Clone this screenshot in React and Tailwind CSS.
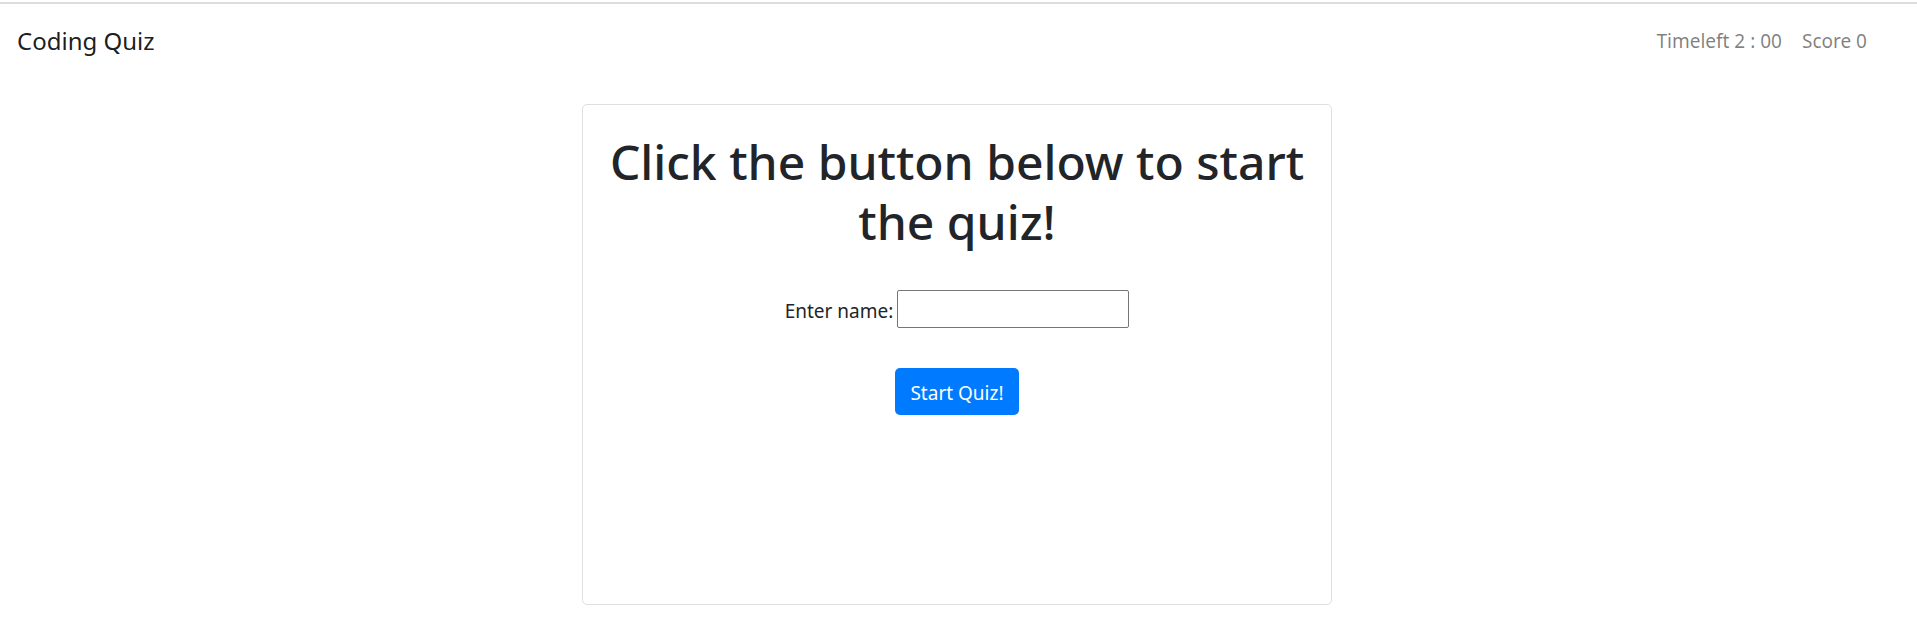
import React from "react";

function NavBar() {
  return (
    <nav className="flex items-center justify-between border-t-2 border-[#dcdcdc] pt-[18px] pr-[50px] pl-[17px]">
      <a href="#" className="text-2xl leading-[38px] text-black/90">
        Coding Quiz
      </a>
      <div className="flex gap-5 text-[19px] leading-[30px] text-black/50">
        <span>Timeleft 2 : 00</span>
        <span>Score 0</span>
      </div>
    </nav>
  );
}

function StartCard() {
  return (
    <section className="flex min-h-[501px] w-full max-w-[750px] flex-col items-center rounded-[5px] border border-[#dfdfdf] px-6 pt-[27px]">
      <h1 className="text-center text-5xl leading-[60px] font-medium">
        Click the button below to start the quiz!
      </h1>
      <div className="mt-[38px] flex items-center gap-1">
        <label htmlFor="name" className="pt-[3px] text-[19px] leading-[30px]">
          Enter name:
        </label>
        <input
          id="name"
          type="text"
          className="h-[38px] w-[232px] rounded-[2px] border border-[#767676] px-1 text-[19px]"
        />
      </div>
      <button
        type="button"
        className="mt-10 rounded-[5px] bg-[#007bff] px-[15px] pt-[10px] pb-[7px] text-[19px] leading-[30px] text-white"
      >
        Start Quiz!
      </button>
    </section>
  );
}

export default function App() {
  return (
    <div className="bg-white pt-[2px] font-['Noto_Sans','Open_Sans',sans-serif] text-[#212529]">
      <NavBar />
      <main className="flex justify-center pt-11 pr-[3px] pb-7">
        <StartCard />
      </main>
    </div>
  );
}
